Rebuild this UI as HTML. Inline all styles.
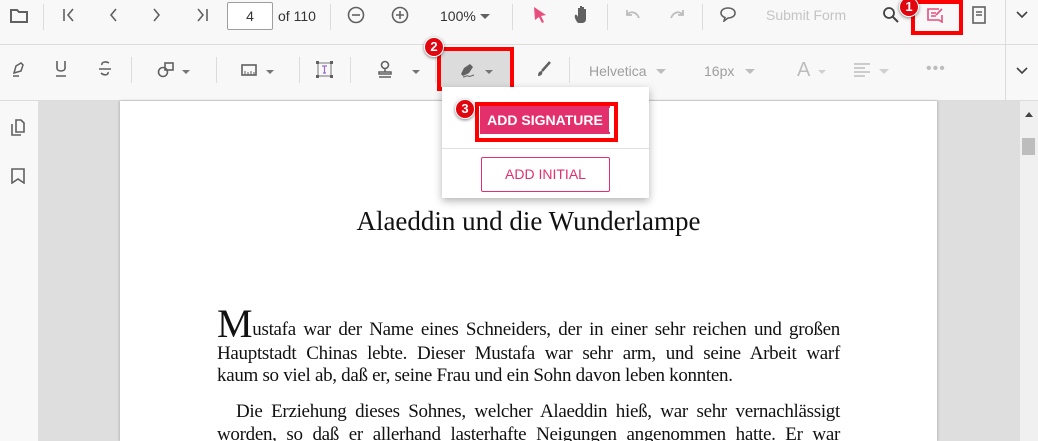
<!DOCTYPE html>
<html><head><meta charset="utf-8"><style>
*{margin:0;padding:0;box-sizing:border-box}
html,body{overflow:hidden}
body{width:1038px;height:441px;background:#dedede;font-family:"Liberation Sans",sans-serif;position:relative}
.a{position:absolute}
.tb{left:0;width:1038px;background:#f8f8f8;border-bottom:1px solid #dcdcdc}
.sep{position:absolute;width:1px;background:#dcdcdc}
.badge{position:absolute;width:20px;height:20px;border-radius:50%;background:#e0050f;color:#fff;font-weight:bold;font-size:13px;text-align:center;line-height:18px;border:1.5px solid #fff;box-shadow:0 1px 3px rgba(0,0,0,.5)}
.red{position:absolute;border:4px solid #f00}
.ln{position:absolute;left:217px;width:623px;font-family:"Liberation Serif",serif;font-size:19px;color:#111;text-align:justify;text-align-last:justify;white-space:nowrap;line-height:20px;letter-spacing:-0.3px}
.gt{color:#757575;font-size:14px}
.caret{position:absolute;width:0;height:0;border-left:4px solid transparent;border-right:4px solid transparent;border-top:4px solid #757575}
</style></head><body>
<div class="a tb" style="top:0;height:45px"></div>
<div class="a tb" style="top:45px;height:56px"></div>
<div class="sep" style="left:43px;top:4px;height:26px"></div>
<div class="sep" style="left:330px;top:4px;height:26px"></div>
<div class="sep" style="left:512px;top:4px;height:26px"></div>
<div class="sep" style="left:607px;top:4px;height:26px"></div>
<div class="sep" style="left:702px;top:4px;height:26px"></div>
<div class="sep" style="left:1005px;top:0;height:101px"></div>
<div class="sep" style="left:131px;top:57px;height:26px"></div>
<div class="sep" style="left:216px;top:57px;height:26px"></div>
<div class="sep" style="left:299px;top:57px;height:26px"></div>
<div class="sep" style="left:350px;top:57px;height:26px"></div>
<div class="sep" style="left:435px;top:57px;height:26px"></div>
<div class="sep" style="left:569px;top:57px;height:26px"></div>
<svg class="a" style="left:10px;top:8px" width="18" height="16" viewBox="0 0 18 16"><path d="M1 2h6l2 2h8v10H1z" fill="none" stroke="#616161" stroke-width="2"/></svg>
<svg class="a" style="left:62px;top:8px" width="14" height="14"><path d="M2 1v12M11 1L6 7l5 6" fill="none" stroke="#616161" stroke-width="1.6"/></svg>
<svg class="a" style="left:107px;top:8px" width="12" height="14"><path d="M9 1L4 7l5 6" fill="none" stroke="#616161" stroke-width="1.6"/></svg>
<svg class="a" style="left:151px;top:8px" width="12" height="14"><path d="M3 1l5 6-5 6" fill="none" stroke="#616161" stroke-width="1.6"/></svg>
<svg class="a" style="left:195px;top:8px" width="14" height="14"><path d="M12 1v12M3 1l5 6-5 6" fill="none" stroke="#616161" stroke-width="1.6"/></svg>
<div class="a" style="left:227px;top:2px;width:46px;height:28px;border:1px solid #9e9e9e;border-radius:2px;background:#fff;font-size:14px;text-align:center;line-height:26px;color:#333">4</div>
<div class="a" style="left:278px;top:8px;font-size:14px;color:#333">of 110</div>
<svg class="a" style="left:347px;top:6px" width="18" height="18"><circle cx="9" cy="9" r="7.5" fill="none" stroke="#616161" stroke-width="1.6"/><path d="M5 9h8" stroke="#616161" stroke-width="1.6"/></svg>
<svg class="a" style="left:391px;top:6px" width="18" height="18"><circle cx="9" cy="9" r="7.5" fill="none" stroke="#616161" stroke-width="1.6"/><path d="M5 9h8M9 5v8" stroke="#616161" stroke-width="1.6"/></svg>
<div class="a" style="left:440px;top:8px;font-size:14px;color:#333">100%</div>
<div class="caret" style="left:480px;top:14px;border-width:5px 5px 0;border-top-color:#616161"></div>
<svg class="a" style="left:533px;top:6px" width="14" height="18"><path d="M1 1l12 8-5 1 3 6-2 1-3-6-4 3z" fill="#e84f7d"/></svg>
<svg class="a" style="left:574px;top:5px" width="18" height="20"><path d="M4 18c-2-2-4-6-3-8 1-1 2 0 3 2V3h2v8V1h2v10V2h2v9V4h2v10c0 3-2 4-4 4z" fill="#616161"/></svg>
<svg class="a" style="left:624px;top:9px" width="18" height="12"><path d="M3 1v5h5M3 6c3-4 9-4 12 3" fill="none" stroke="#bdbdbd" stroke-width="1.8"/></svg>
<svg class="a" style="left:668px;top:9px" width="18" height="12"><path d="M15 1v5h-5M15 6c-3-4-9-4-12 3" fill="none" stroke="#bdbdbd" stroke-width="1.8"/></svg>
<svg class="a" style="left:719px;top:6px" width="18" height="16"><path d="M9 2c4 0 7 2 7 5s-3 5-7 5l-4 3 1-3.5C3 10.5 2 9 2 7c0-3 3-5 7-5z" fill="none" stroke="#616161" stroke-width="1.6"/></svg>
<div class="a" style="left:766px;top:7px;font-size:14px;color:#c4c4c4">Submit Form</div>
<svg class="a" style="left:882px;top:6px" width="18" height="18"><circle cx="7" cy="7" r="5" fill="none" stroke="#424242" stroke-width="1.8"/><path d="M11 11l5 5" stroke="#424242" stroke-width="2"/></svg>
<svg class="a" style="left:926px;top:7px" width="18" height="16"><path d="M13 2H2v11h11l3 2V8" fill="none" stroke="#e84f7d" stroke-width="1.6"/><path d="M5 6h5M5 9h5M10 8l6-6" stroke="#e84f7d" stroke-width="1.6"/></svg>
<div class="red" style="left:911px;top:0;width:52px;height:35px"></div>
<div class="badge" style="left:899px;top:-3px">1</div>
<svg class="a" style="left:972px;top:6px" width="14" height="18"><rect x="1" y="1" width="12" height="16" fill="none" stroke="#616161" stroke-width="1.6"/><path d="M4 6h6M4 9h6" stroke="#616161" stroke-width="1.4"/></svg>
<svg class="a" style="left:1015px;top:10px" width="14" height="10"><path d="M2 2l5 5 5-5" fill="none" stroke="#424242" stroke-width="1.6"/></svg>
<svg class="a" style="left:10px;top:61px" width="16" height="18"><path d="M3 15h6M4 12l2-7 5-3 2 2-2 6z" fill="none" stroke="#616161" stroke-width="1.5"/></svg>
<svg class="a" style="left:54px;top:60px" width="14" height="18"><path d="M3 1v7c0 4 8 4 8 0V1M2 16h10" fill="none" stroke="#616161" stroke-width="1.6"/></svg>
<svg class="a" style="left:97px;top:60px" width="16" height="18"><path d="M12 3C9 1 4 2 5 5M2 9h12M4 13c3 3 8 2 7-1" fill="none" stroke="#616161" stroke-width="1.6"/></svg>
<svg class="a" style="left:157px;top:62px" width="18" height="16"><circle cx="6" cy="10" r="4.5" fill="none" stroke="#616161" stroke-width="1.6"/><rect x="8" y="1" width="8" height="7" fill="none" stroke="#616161" stroke-width="1.6"/></svg>
<div class="caret" style="left:182px;top:70px"></div>
<svg class="a" style="left:241px;top:64px" width="16" height="12"><rect x="1" y="1" width="14" height="10" fill="none" stroke="#616161" stroke-width="1.6"/><path d="M4 11V7M7 11V8M10 11V7M13 11V8" stroke="#616161"/></svg>
<div class="caret" style="left:266px;top:70px"></div>
<svg class="a" style="left:316px;top:61px" width="17" height="17"><rect x="2" y="2" width="13" height="13" fill="none" stroke="#757575" stroke-width="1"/><path d="M6 5h5M8.5 5v7M7 12h3" stroke="#9c6bd0" stroke-width="1.2"/><rect x="0" y="0" width="3" height="3" fill="#616161"/><rect x="14" y="0" width="3" height="3" fill="#616161"/><rect x="0" y="14" width="3" height="3" fill="#616161"/><rect x="14" y="14" width="3" height="3" fill="#616161"/></svg>
<svg class="a" style="left:377px;top:60px" width="16" height="18"><circle cx="8" cy="5" r="3.5" fill="none" stroke="#616161" stroke-width="1.6"/><path d="M8 8v4M2 12h12v2H2zM2 17h12" fill="none" stroke="#616161" stroke-width="1.5"/></svg>
<div class="caret" style="left:412px;top:70px"></div>
<div class="a" style="left:440px;top:49px;width:72px;height:41px;background:#dcdcdc"></div>
<svg class="a" style="left:458px;top:61px" width="18" height="18"><path d="M3 13l3-6 6-4 3 3-4 6-6 3z M12 3l3 3" fill="#616161"/><path d="M5 16c3 0 3-2 5-1s3 0 6-1" fill="none" stroke="#616161"/></svg>
<div class="caret" style="left:485px;top:70px"></div>
<div class="red" style="left:437px;top:47px;width:77px;height:44px"></div>
<div class="badge" style="left:424px;top:37px">2</div>
<svg class="a" style="left:536px;top:61px" width="16" height="16"><path d="M14 1L6 10" stroke="#616161" stroke-width="2.5"/><path d="M2 15c0-3 1-5 4-5 1 2 0 5-4 5z" fill="#616161"/></svg>
<div class="a gt" style="left:589px;top:63px;color:#9e9e9e">Helvetica</div>
<div class="caret" style="left:656px;top:69px;border-width:5px 5px 0;border-top-color:#bdbdbd"></div>
<div class="a gt" style="left:704px;top:63px;color:#9e9e9e">16px</div>
<div class="caret" style="left:745px;top:69px;border-width:5px 5px 0;border-top-color:#bdbdbd"></div>
<div class="a" style="left:797px;top:59px;font-size:20px;color:#bdbdbd">A</div>
<div class="caret" style="left:818px;top:70px;border-top-color:#d0d0d0"></div>
<svg class="a" style="left:854px;top:63px" width="18" height="14"><path d="M0 1h16M0 5h11M0 9h16M0 13h11" stroke="#bdbdbd" stroke-width="1.6"/></svg>
<div class="caret" style="left:879px;top:69px;border-width:5px 5px 0;border-top-color:#d0d0d0"></div>
<div class="a" style="left:926px;top:60px;font-size:16px;color:#bdbdbd;letter-spacing:1px">•••</div>
<svg class="a" style="left:1015px;top:66px" width="14" height="10"><path d="M2 2l5 5 5-5" fill="none" stroke="#424242" stroke-width="1.6"/></svg>
<div class="a" style="left:0;top:101px;width:38px;height:340px;background:#f8f8f8"></div>
<svg class="a" style="left:10px;top:119px" width="16" height="18"><path d="M6 1h5l3 3v9H6z" fill="none" stroke="#616161" stroke-width="1.6"/><path d="M2 5v11h9" fill="none" stroke="#616161" stroke-width="1.6"/></svg>
<svg class="a" style="left:11px;top:168px" width="14" height="16"><path d="M1 1h12v14l-6-4-6 4z" fill="none" stroke="#616161" stroke-width="1.6"/></svg>
<div class="a" style="left:1020px;top:101px;width:18px;height:340px;background:#f0f0f0"></div>
<div class="a" style="left:1025px;top:112px;width:0;height:0;border-left:4px solid transparent;border-right:4px solid transparent;border-bottom:5px solid #444"></div>
<div class="a" style="left:1022px;top:138px;width:13px;height:17px;background:#bdbdbd"></div>
<div class="a" style="left:120px;top:101px;width:817px;height:340px;background:#fff;box-shadow:-1px 0 2px #bbb,1px 0 2px #bbb"></div>
<div class="a" style="left:120px;top:206px;width:817px;text-align:center;font-family:'Liberation Serif',serif;font-size:27px;color:#111">Alaeddin und die Wunderlampe</div>
<div class="ln" style="top:312px;line-height:24px"><span style="font-size:40px;vertical-align:-2px">M</span>ustafa war der Name eines Schneiders, der in einer sehr reichen und großen</div>
<div class="ln" style="top:344px">Hauptstadt Chinas lebte. Dieser Mustafa war sehr arm, und seine Arbeit warf</div>
<div class="ln" style="top:366px;text-align-last:left">kaum so viel ab, daß er, seine Frau und ein Sohn davon leben konnten.</div>
<div class="ln" style="top:402px;padding-left:19px">Die Erziehung dieses Sohnes, welcher Alaeddin hieß, war sehr vernachlässigt</div>
<div class="ln" style="top:425px">worden, so daß er allerhand lasterhafte Neigungen angenommen hatte. Er war</div>
<div class="a" style="left:442px;top:87px;width:207px;height:111px;background:#fff;box-shadow:0 3px 8px rgba(0,0,0,.3)"></div>
<div class="a" style="left:442px;top:148px;width:207px;height:1px;background:#e0e0e0"></div>
<div class="a" style="left:480px;top:106px;width:130px;height:28px;background:#e3306c;color:#fff;font-weight:bold;font-size:14px;text-align:center;line-height:28px">ADD SIGNATURE</div>
<div class="a" style="left:609px;top:108px;width:2px;height:24px;background:#fff"></div>
<div class="red" style="left:475px;top:102px;width:143px;height:40px"></div>
<div class="badge" style="left:455px;top:99px">3</div>
<div class="a" style="left:481px;top:157px;width:129px;height:35px;border:1px solid #e3306c;border-radius:2px;color:#e3306c;font-size:14px;text-align:center;line-height:33px">ADD INITIAL</div>
</body></html>
